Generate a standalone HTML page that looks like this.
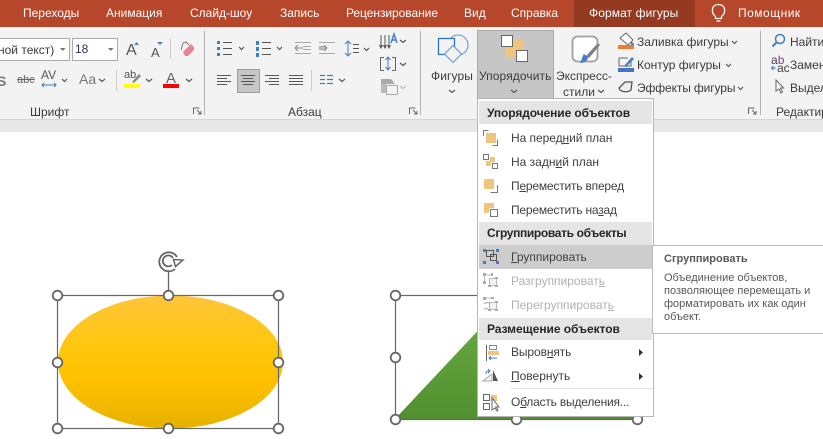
<!DOCTYPE html>
<html><head><meta charset="utf-8"><style>
html,body{margin:0;padding:0;background:#fff}
#p{position:relative;width:823px;height:439px;overflow:hidden;background:#fff;font-family:"Liberation Sans",sans-serif;font-size:12px;color:#3b3b3b}
#p div{position:absolute}
.t{white-space:nowrap;line-height:14px;height:14px}
.w{color:#fff}
.h{font-weight:bold;color:#262626}
.m{color:#3f3f3f}
.d{color:#b1b1b1}
.tt{color:#595959;font-size:11px;line-height:13px;height:13px;white-space:nowrap}
svg{position:absolute;left:0;top:0}
</style></head><body><div id="p">
<div style="left:0;top:0;width:823px;height:27px;background:#B7472A"></div>
<div style="left:574px;top:0;width:121px;height:27px;background:#933A21"></div>
<div style="left:0;top:27px;width:823px;height:92px;background:#F3F3F3"></div>
<div style="left:0;top:119px;width:823px;height:1px;background:#D6D6D6"></div>
<div style="left:0;top:120px;width:823px;height:12px;background:#E8E8E8"></div>
<div style="left:204px;top:31px;width:1px;height:84px;background:#B3B3B3"></div>
<div style="left:420px;top:31px;width:1px;height:84px;background:#B3B3B3"></div>
<div style="left:760px;top:31px;width:1px;height:84px;background:#B3B3B3"></div>
<div style="left:-1px;top:38px;width:69px;height:21px;background:#fff;border:1px solid #ABABAB"></div>
<div style="left:72px;top:38px;width:44px;height:21px;background:#fff;border:1px solid #ABABAB"></div>
<div style="left:237px;top:69px;width:21px;height:22px;background:#C6C6C6;border:1px solid #9E9E9E"></div>
<div style="left:477px;top:30px;width:75px;height:67px;background:#C6C6C6;border:1px solid #ABABAB"></div>

<div class="t w" style="left:23px;top:6px">Переходы</div>
<div class="t w" style="left:106px;top:6px">Анимация</div>
<div class="t w" style="left:190px;top:6px">Слайд-шоу</div>
<div class="t w" style="left:280px;top:6px">Запись</div>
<div class="t w" style="left:346px;top:6px;letter-spacing:-.05px">Рецензирование</div>
<div class="t w" style="left:464px;top:6px">Вид</div>
<div class="t w" style="left:511px;top:6px">Справка</div>
<div class="t w" style="left:589px;top:6px;letter-spacing:.1px">Формат фигуры</div>
<div class="t w" style="left:738px;top:6px;letter-spacing:.5px">Помощник</div>

<div class="t" style="left:-2px;top:43px">ной текст)</div>
<div class="t" style="left:75px;top:42px;color:#3d2a5c">18</div>
<div class="t" style="left:30px;top:105px">Шрифт</div>
<div class="t" style="left:288px;top:105px">Абзац</div>
<div class="t" style="left:431px;top:69px;letter-spacing:.1px">Фигуры</div>
<div class="t" style="left:479px;top:69px;letter-spacing:.1px">Упорядочить</div>
<div class="t" style="left:556px;top:69px">Экспресс-</div>
<div class="t" style="left:563px;top:85px">стили</div>
<div class="t" style="left:637px;top:35px">Заливка фигуры</div>
<div class="t" style="left:637px;top:58px">Контур фигуры</div>
<div class="t" style="left:637px;top:81px;letter-spacing:-.12px">Эффекты фигуры</div>
<div class="t" style="left:790px;top:35px">Найти</div>
<div class="t" style="left:790px;top:58px">Замен</div>
<div class="t" style="left:790px;top:81px">Выдел</div>
<div class="t" style="left:776px;top:105px">Редактир</div>
<div class="t" style="left:-3px;top:74px;font-weight:bold;font-size:14px;color:#777">S</div>
<div class="t" style="left:17px;top:73px;font-size:11px;color:#666;text-decoration:line-through">abc</div>
<div class="t" style="left:41px;top:68px;font-size:12px;color:#555">AV</div>
<div class="t" style="left:79px;top:72px;font-size:14px;color:#777">Aa</div>
<div class="t" style="left:126px;top:44px;font-size:16px;color:#555">A</div>
<div class="t" style="left:151px;top:46px;font-size:13px;color:#555">A</div>
<div class="t" style="left:124px;top:68px;font-size:11px;color:#555">ab</div>
<div class="t" style="left:166px;top:72px;font-size:15px;color:#666">A</div>
<div class="t" style="left:771px;top:55px;font-size:12px;color:#444;line-height:11px">a<span style="color:#7d3c98">b</span></div>
<div class="t" style="left:777px;top:63px;font-size:12px;color:#444;line-height:11px">ac</div>

<svg width="823" height="439" fill="none">
<!-- tell me bulb -->
<path d="M715.500 16.500c-5-4-4-12 3-12s8 8 3 12v2h-6zM716.500 21h4" stroke="#fff" stroke-width="1.300"/>
<!-- chevrons -->
<g stroke="#555" stroke-width="1.200">
<path d="M62 79l2.500 2.500 2.500-2.500M99 79l3 2.500 3-2.500M146 79l3 2.500 3-2.500M186 79l3 2.500 3-2.500M239 47l2.500 2.500 2.500-2.500M277 47l2.500 2.500 2.500-2.500M364 48l2.500 2.500 2.500-2.500M400 40l3 2.500 3-2.500M400 63l3 2.500 3-2.500M339 79l3 2.500 3-2.500M449 90l3 2.500 3-2.500M511 90l3 2.500 3-2.500M598 90l3 2.500 3-2.500M732 41l2.500 2.500 2.500-2.500M726 64l2.500 2.500 2.500-2.500M738 87l2.500 2.500 2.500-2.500"/>
<path d="M400 86l3 2.500 3-2.500" stroke="#bbb"/>
</g>
<path d="M60 48h5.500l-2.750 3zM108 48h5.500l-2.750 3z" fill="#777"/>
<!-- grow/shrink arrows -->
<path d="M134 45l2.500-3 2.500 3zM157 42l3 3 3-3z" fill="#4a86c5"/>
<path d="M170.500 39v20" stroke="#ccc"/>
<!-- eraser -->
<path d="M183 52l8-8 3 3v3l-6 6h-3z" fill="#E8868F"/><path d="M181 50l2-7 3-1 3 3" stroke="#777"/>
<!-- separators -->
<path d="M116.500 70v21M311.500 70v21" stroke="#ccc"/>
<!-- AV arrow -->
<path d="M42 85h14M44 83l-2 2 2 2M54 83l2 2-2 2" stroke="#3F7EBF"/>
<!-- highlight, font color bars -->
<rect x="124" y="84" width="16" height="4" fill="#FFFF00"/>
<rect x="163" y="84" width="16" height="4" fill="#FF0000"/>
<path d="M132 82l7-8 2 2-7 7z" fill="#888"/>
<!-- launchers -->
<g stroke="#666"><path d="M193.500 114v-6h6M197 110l4 4M201 111v3h-3M409.500 114v-6h6M413 110l4 4M417 111v3h-3M748.500 114v-6h6M752 110l4 4M756 111v3h-3"/></g>
<!-- bullets -->
<g fill="#3F7EBF"><rect x="217" y="41" width="3" height="3"/><rect x="217" y="47" width="3" height="3"/><rect x="217" y="53" width="3" height="3"/><rect x="256" y="41" width="3" height="4"/><rect x="256" y="47" width="3" height="4"/><rect x="256" y="53" width="3" height="4"/></g>
<path d="M223 42.500h9M223 48.500h9M223 54.500h9M262 42.500h9M262 48.500h9M262 54.500h9" stroke="#555"/>
<!-- indents -->
<path d="M295 42.500h16M303 46.500h8M303 49.500h8M295 53.500h16M319 42.500h16M319 46.500h7M319 49.500h7M319 53.500h16" stroke="#aaa"/>
<path d="M303 48h-8M298 45l-3 3 3 3M319 48h8M324 45l3 3-3 3" stroke="#888"/>
<!-- line spacing -->
<path d="M348 41v15M345 44l3-3 3 3M345 53l3 3 3-3" stroke="#3F7EBF"/>
<path d="M353 44.500h6M353 48.500h6M353 52.500h6" stroke="#555"/>
<!-- text dir -->
<path d="M381 35v13M385 35v13M389 35v13M379.500 45l1.500 3 1.500-3M383.500 45l1.500 3 1.500-3M387.500 45l1.500 3 1.500-3" stroke="#555"/>
<path d="M391 43l3-9 3 9M392 40h4" stroke="#3F7EBF" stroke-width="1.400"/>
<!-- text align -->
<path d="M384 57.500h-3.500v13h3.500M392 57.500h3.500v13h-3.500" stroke="#666"/>
<path d="M388 57v13M385.500 60l2.500-3 2.500 3M385.500 67l2.500 3 2.500-3" stroke="#3F7EBF"/>
<!-- smartart -->
<path d="M381 79h10l4 5h-14z" fill="#aaa"/><rect x="381" y="84" width="5" height="9" fill="#bbb"/><rect x="386.500" y="85.500" width="11" height="9" fill="#f3f3f3" stroke="#aaa"/>
<!-- align row -->
<path d="M217 75.500h14M217 78.500h10M217 81.500h14M217 84.500h10M241 75.500h14M243 78.500h10M241 81.500h14M243 84.500h10M265 75.500h14M269 78.500h10M265 81.500h14M269 84.500h10M289 75.500h14M289 78.500h14M289 81.500h14M289 84.500h14" stroke="#555"/>
<path d="M320 75.500h5M327 75.500h6M320 79.500h5M327 79.500h6M320 83.500h5M327 83.500h6" stroke="#3F7EBF" stroke-width="1.200"/>
<!-- shapes icon -->
<circle cx="458" cy="45" r="10" fill="#F3F3F3" stroke="#7BA5D3" stroke-width="1.300"/>
<rect x="438.500" y="38.500" width="16" height="16" fill="#F3F3F3" stroke="#2E75B6" stroke-width="1.300"/>
<path d="M453 45.500l8.500 8.500-8.500 8.500-8.500-8.500z" fill="#F3F3F3" stroke="#7BA5D3" stroke-width="1.300"/>
<!-- arrange icon -->
<rect x="505" y="39" width="19" height="19" fill="#EDC57F"/>
<rect x="501.500" y="35.500" width="11" height="11" fill="#fff" stroke="#666"/>
<rect x="516.500" y="50.500" width="11" height="11" fill="#fff" stroke="#666"/>
<!-- quick styles -->
<rect x="572.500" y="36.500" width="25" height="25" rx="5" fill="#fff" stroke="#a0a0a0" stroke-width="1.800"/>
<path d="M586 56l12-13 2 2-11 13z" fill="#808080"/><path d="M584 54l4 3c0 4-4 6-8 6 2-2 2-7 4-9z" fill="#3F7EBF"/>
<!-- fill -->
<path d="M620 38l6-5 7 7-5 5z" fill="#fff" stroke="#666"/><path d="M631 41l3 3v1h-3z" fill="#3F7EBF"/><rect x="618" y="45" width="16" height="4" fill="#ED7D31"/>
<!-- outline -->
<path d="M619 58h9M619 58v8h12v-7" stroke="#666"/><path d="M624 66l8-9 2 2-8 8z" fill="#3F7EBF"/><rect x="618" y="68" width="16" height="4" fill="#4472C4"/>
<!-- effects -->
<path d="M619 88l6-6h7l-1 8c-4 3-11 2-12-2z" fill="#eee" stroke="#555" stroke-width="1.300"/>
<!-- find -->
<circle cx="780" cy="39" r="4.500" stroke="#3F7EBF" stroke-width="1.500"/><path d="M776.500 42.500l-4 4" stroke="#3F7EBF" stroke-width="2"/>
<path d="M776 68h-4M773.500 66l-2 2 2 2" stroke="#3F7EBF"/>
<path d="M776 80v11l3-2 2 4 1.500-1-2-4h3z" fill="#fff" stroke="#666"/>
<!-- canvas shapes -->
<defs>
<linearGradient id="e" x1="0" y1="0" x2="0" y2="1"><stop offset="0" stop-color="#FFC53A"/><stop offset=".4" stop-color="#FFC60C"/><stop offset=".65" stop-color="#FFC000"/><stop offset="1" stop-color="#E6B100"/></linearGradient>
<linearGradient id="g" x1="0" y1="0" x2="0" y2="1"><stop offset="0" stop-color="#70B045"/><stop offset="1" stop-color="#50902F"/></linearGradient>
</defs>
<ellipse cx="170.500" cy="362" rx="112.500" ry="66.500" fill="url(#e)"/>
<path d="M168.500 295V271" stroke="#666" stroke-width="1.300"/>
<rect x="57.500" y="295.500" width="221" height="133" stroke="#666" stroke-width="1.200"/>
<path d="M175 269a9.500 9.500 0 1 1 2-12" stroke="#666" stroke-width="1.800"/>
<path d="M172 265a5.500 5.500 0 1 1 1-7" stroke="#666" stroke-width="1.800"/>
<path d="M173.500 259.500l9.500.5-7.500 6.500z" fill="#fff" stroke="#666" stroke-width="1.500"/>
<path d="M395 419L516 290L640 419z" fill="url(#g)"/>
<rect x="395.500" y="295.500" width="242" height="124" stroke="#666" stroke-width="1.200"/>
<g fill="#fff" stroke="#666" stroke-width="1.800">
<circle cx="57.500" cy="295.500" r="4.800"/><circle cx="168.500" cy="295.500" r="4.800"/><circle cx="278.500" cy="295.500" r="4.800"/>
<circle cx="57.500" cy="362.500" r="4.800"/><circle cx="278.500" cy="362.500" r="4.800"/>
<circle cx="57.500" cy="428.500" r="4.800"/><circle cx="168.500" cy="428.500" r="4.800"/><circle cx="278.500" cy="428.500" r="4.800"/>
<circle cx="395.500" cy="295.500" r="4.800"/><circle cx="395.500" cy="357.500" r="4.800"/><circle cx="395.500" cy="419.500" r="4.800"/>
<circle cx="516.500" cy="419.500" r="4.800"/><circle cx="637.500" cy="419.500" r="4.800"/>
</g>
</svg>

<!-- menu -->
<div style="left:477px;top:98px;width:175px;height:317px;background:#fff;border:1px solid #B5B5B5"></div>
<div style="left:479px;top:101px;width:173px;height:23px;background:#E5E5E5"></div>
<div style="left:479px;top:222px;width:173px;height:23px;background:#E5E5E5"></div>
<div style="left:479px;top:318px;width:173px;height:22px;background:#E5E5E5"></div>
<div style="left:479px;top:245px;width:173px;height:24px;background:#CDCDCD"></div>
<div style="left:511px;top:388px;width:141px;height:1px;background:#E0E0E0"></div>
<div class="t h" style="left:487px;top:106px;letter-spacing:-.1px">Упорядочение объектов</div>
<div class="t m" style="left:511px;top:131px;letter-spacing:-.05px">На перед<u>н</u>ий план</div>
<div class="t m" style="left:511px;top:155px">На задн<u>и</u>й план</div>
<div class="t m" style="left:511px;top:179px;letter-spacing:-.2px">П<u>е</u>реместить вперед</div>
<div class="t m" style="left:511px;top:203px;letter-spacing:-.2px">Переместить на<u>з</u>ад</div>
<div class="t h" style="left:487px;top:226px;letter-spacing:-.35px">Сгруппировать объекты</div>
<div class="t m" style="left:511px;top:250px"><u>Г</u>руппировать</div>
<div class="t d" style="left:511px;top:274px">Разгруппироват<u>ь</u></div>
<div class="t d" style="left:511px;top:298px">Перегруппироват<u>ь</u></div>
<div class="t h" style="left:487px;top:322px;letter-spacing:-.05px">Размещение объектов</div>
<div class="t m" style="left:511px;top:345px;letter-spacing:-.1px">Выров<u>н</u>ять</div>
<div class="t m" style="left:511px;top:369px"><u>П</u>овернуть</div>
<div class="t m" style="left:511px;top:395px;letter-spacing:-.2px">О<u>б</u>ласть выделения...</div>
<svg width="823" height="439" fill="none">
<path d="M639 349l4 3.500-4 3.500zM639 373l4 3.500-4 3.500z" fill="#333"/>
<rect x="486" y="133" width="10" height="10" fill="#EDC57F"/><path d="M483.500 136v-5.500h5M497.500 139.500v6h-5" stroke="#777"/>
<rect x="490" y="157" width="5" height="5" fill="#EDC57F"/><rect x="486" y="161" width="5" height="5" fill="#EDC57F"/><rect x="483.500" y="154.500" width="5" height="5" fill="#fff" stroke="#777"/><rect x="492.500" y="163.500" width="5" height="5" fill="#fff" stroke="#777"/>
<rect x="484" y="179" width="10" height="10" fill="#EDC57F"/><path d="M497.500 185v7.500h-7" stroke="#777"/>
<path d="M484 203h10v5h-5v5h-5z" fill="#EDC57F"/><rect x="490.500" y="209.500" width="7" height="7" fill="#fff" stroke="#777"/>
<g stroke="#555"><rect x="486.500" y="250.500" width="7" height="6"/><rect x="490.500" y="254.500" width="6" height="6"/></g>
<g fill="#3F7EBF"><rect x="483" y="249" width="3" height="3"/><rect x="496" y="249" width="3" height="3"/><rect x="483" y="261" width="3" height="3"/><rect x="496" y="261" width="3" height="3"/></g>
<path d="M484.500 274v9M484.500 275h8" stroke="#bbb"/><rect x="489.500" y="278.500" width="7" height="7" fill="#f5f0f5" stroke="#bbb"/>
<g fill="#aaa"><rect x="483" y="273" width="3" height="3"/><rect x="491" y="273" width="2" height="3"/><rect x="483" y="281" width="3" height="3"/><rect x="488" y="285" width="3" height="2"/><rect x="495" y="285" width="3" height="2"/><rect x="495" y="277" width="3" height="2"/></g>
<path d="M484.500 298h8" stroke="#bbb"/><rect x="489.500" y="302.500" width="7" height="7" fill="#f5f0f5" stroke="#bbb"/><path d="M484 304c3-2 5-2 6 0M484 308c2 2 3 1 4 0" stroke="#aaa"/>
<g fill="#aaa"><rect x="483" y="297" width="3" height="3"/><rect x="491" y="297" width="3" height="2"/><rect x="488" y="309" width="3" height="2"/><rect x="495" y="309" width="3" height="2"/><rect x="495" y="301" width="3" height="2"/></g>
<path d="M486.500 345v16" stroke="#666"/><rect x="489.500" y="345.500" width="7" height="4" stroke="#888"/><rect x="488" y="351" width="11" height="4" fill="#EDC57F"/><path d="M497 358h-8M491 356l-2 2 2 2" stroke="#3F7EBF"/>
<path d="M483 381l9-7v7z" fill="#f3f3f3" stroke="#aaa"/><path d="M493 370l5 11h-5z" fill="#555"/><path d="M486 374c0-3 1-3 4-3M488 369l2 2-2 2" stroke="#3F7EBF"/>
<rect x="483.500" y="394.500" width="6" height="6" stroke="#666"/><rect x="483.500" y="403.500" width="6" height="6" stroke="#666"/><rect x="491" y="395" width="6" height="6" fill="#EDC57F"/><path d="M492 398v12l3-2 2 3 1-1-2-3h3z" fill="#fff" stroke="#666"/>
</svg>
<!-- tooltip -->
<div style="left:652px;top:245px;width:175px;height:87px;background:#fff;border:1px solid #BDBDBD"></div>
<div class="tt" style="left:664px;top:253px;font-weight:bold;color:#595959">Сгруппировать</div>
<div class="tt" style="left:664px;top:272px">Объединение объектов,</div>
<div class="tt" style="left:664px;top:285px">позволяющее перемещать и</div>
<div class="tt" style="left:664px;top:298px">форматировать их как один</div>
<div class="tt" style="left:664px;top:311px">объект.</div>
</div></body></html>
